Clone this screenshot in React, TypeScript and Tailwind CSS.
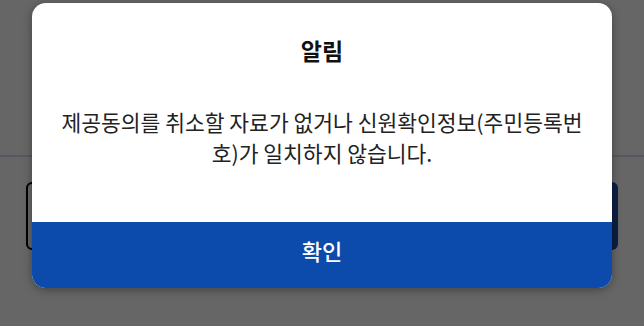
import React from "react";

export default function App() {
  const font = { fontFamily: '"Noto Sans CJK KR", "Noto Sans", sans-serif' };
  return (
    <div className="relative h-[326px] w-full overflow-hidden bg-white" style={font}>
      {/* underlying page */}
      <div className="flex h-full flex-col">
        <div className="h-[157px] border-b-2 border-[#d5dded]" />
        <div className="flex gap-3 px-[26px] pt-[25px]">
          <button className="h-[68px] flex-1 rounded-md border-2 border-black bg-white text-lg">취소</button>
          <button className="h-[68px] flex-1 rounded-md bg-[#1e4fa8] text-lg text-white">다음</button>
        </div>
      </div>
      {/* overlay */}
      <div className="absolute inset-0 bg-black/60" />
      {/* modal */}
      <div className="absolute left-[32px] top-[3px] w-[580px] overflow-hidden rounded-[14px] bg-white shadow-[0_2px_10px_rgba(0,0,0,0.35)]">
        <div className="flex flex-col items-center px-6 pt-[32px] pb-[54px]">
          <h2 className="text-[23px] font-bold leading-[30px] text-[#111]">알림</h2>
          <p className="mt-[41px] break-all text-center text-[21.5px] leading-[31px] text-[#222]">
            제공동의를 취소할 자료가 없거나 신원확인정보(주민등록번호)가 일치하지 않습니다.
          </p>
        </div>
        <button className="flex h-[66px] w-full items-center justify-center bg-[#0c4aab] pb-[10px] text-[22px] font-medium text-white">
          확인
        </button>
      </div>
    </div>
  );
}
